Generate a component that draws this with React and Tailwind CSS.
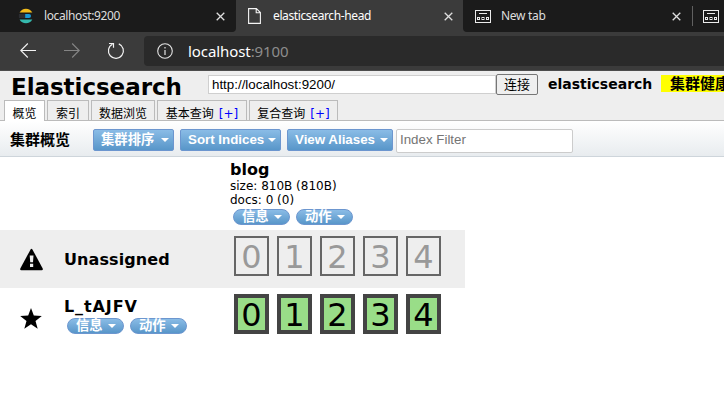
import React from "react";

const UI = "font-['Noto_Sans','Noto_Sans_CJK_SC',sans-serif]";
const VERDANA = "font-['DejaVu_Sans','Noto_Sans_CJK_SC',sans-serif]";
const ARIAL = "font-['Liberation_Sans','Noto_Sans_CJK_SC',sans-serif]";

function Close({ className = "" }) {
  return (
    <svg width="9" height="9" viewBox="0 0 9 9" className={className} fill="none" stroke="#dedede" strokeWidth="1.3">
      <path d="M.7.7l7.6 7.6M8.3.7L.7 8.3" />
    </svg>
  );
}

function ElasticLogo() {
  return (
    <svg width="16" height="16" viewBox="0 0 16 16" className="shrink-0">
      <path d="M1.6 4.6A7.2 7.2 0 0 1 14.3 4.6z" fill="#f2bc1b" />
      <path d="M1 6h6.2v4H1a8 8 0 0 1 0-4z" fill="#2c2e33" />
      <path d="M7.2 6h3.8a2 2 0 0 1 0 4H7.2z" fill="#1a9ad6" />
      <path d="M1.6 11.4h12.7A7.2 7.2 0 0 1 1.6 11.4z" fill="#35b9ad" />
    </svg>
  );
}

function NewTabIcon() {
  return (
    <svg width="16" height="13" viewBox="0 0 16 13" fill="none" stroke="#ececec" className="shrink-0">
      <rect x=".5" y=".5" width="15" height="12" />
      <path d="M4 3.5h8" />
      <rect x="2.5" y="7.5" width="2" height="2" />
      <rect x="7" y="7.5" width="2" height="2" />
      <rect x="11.5" y="7.5" width="2" height="2" />
    </svg>
  );
}

function BrowserTabs() {
  return (
    <div className={`flex h-8 bg-[#3b3b3b] text-[12px] leading-8 ${UI}`}>
      <div className="flex h-8 w-[236px] items-center rounded-br-[4px] bg-[#1b1b1b] pl-[18px] text-[#dedede]">
        <ElasticLogo />
        <span className="ml-[10px] w-[172px] tracking-[-0.38px]">localhost:9200</span>
        <Close />
      </div>
      <div className="flex h-8 w-[227px] items-center pl-3 text-white">
        <svg width="13" height="16" viewBox="0 0 13 16" fill="none" stroke="#f4f4f4" strokeWidth="1.1">
          <path d="M.6.6h7.8l4 4v10.8H.6zM8.2.6v4.2h4.2" />
        </svg>
        <span className="ml-[12px] w-[171px] tracking-[-0.38px]">elasticsearch-head</span>
        <Close />
      </div>
      <div className="flex h-8 grow items-center rounded-bl-[4px] bg-[#1b1b1b] pl-[12px] text-[#dedede]">
        <NewTabIcon />
        <span className="ml-[10px] w-[171px] tracking-[-0.3px]">New tab</span>
        <Close />
        <div className="mr-[10px] ml-[11px] h-5 w-px bg-[#606060]" />
        <NewTabIcon />
      </div>
    </div>
  );
}

function AddressBar() {
  return (
    <div className="flex h-[39px] items-start border-b border-[#4d4d4d] bg-[#3b3b3b] pt-1 pl-5">
      <svg width="16" height="16" viewBox="0 0 16 16" fill="none" stroke="#f2f2f2" strokeWidth="1.1" className="mt-[7px]">
        <path d="M16 7.5H.8M7.8.5l-7 7 7 7" />
      </svg>
      <svg width="16" height="16" viewBox="0 0 16 16" fill="none" stroke="#858585" strokeWidth="1.1" className="mt-[7px] ml-7">
        <path d="M0 7.5h15.2M8.2.5l7 7-7 7" />
      </svg>
      <svg width="18" height="18" viewBox="0 0 18 18" fill="none" stroke="#f2f2f2" strokeWidth="1.2" className="mt-[6px] ml-[27px]">
        <path d="M11.8 1.9A7.5 7.5 0 1 1 5.4 2.2M2 1.5h4.5v4.3" />
      </svg>
      <div className={`ml-[19px] flex h-[30px] grow items-center rounded-l-[4px] bg-[#2a2a2a] pl-[13px] text-[15px] leading-[30px] text-white ${UI}`}>
        <svg width="16" height="16" viewBox="0 0 16 16" fill="none" stroke="#e4e4e4" strokeWidth="1.1">
          <circle cx="8" cy="8" r="7.3" />
          <path d="M8 7v5M8 4v1.5" strokeWidth="1.2" />
        </svg>
        <span className="ml-[15px] tracking-[-0.08px]">
          localhost<span className="text-[#8d8d8d]">:9100</span>
        </span>
      </div>
    </div>
  );
}

function Header() {
  return (
    <div className={`flex h-[29px] items-start overflow-hidden bg-[#eeeeee] pt-[3px] pl-[11px] font-bold whitespace-nowrap text-black ${VERDANA}`}>
      <h1 className="h-[26px] w-[197px] shrink-0 text-[23px] leading-[27px] tracking-[-0.05px]">Elasticsearch</h1>
      <div className={`mt-[1px] h-[19px] w-[288px] shrink-0 border border-[#cfcfcf] bg-white pl-[3px] text-[13.33px] leading-[17px] font-normal ${ARIAL}`}>
        http://localhost:9200/
      </div>
      <div className="h-[21px] w-[42px] shrink-0 rounded-[2px] border border-[#767676] bg-[#efefef] text-center text-[13px] leading-[19px] font-normal">
        连接
      </div>
      <span className="ml-[10px] w-[113px] shrink-0 text-[14px] leading-[20px]">elasticsearch</span>
      <div className="mt-[1px] h-[17px] w-[63px] shrink-0 bg-[#ffff00] pl-[9px] text-[15px] leading-[18px]">集群健康</div>
    </div>
  );
}

function NavTab({ label, plus, active, width }) {
  return (
    <div
      style={{ width }}
      className={`flex justify-center border border-b-0 border-[#bbbbbb] text-[12px] ${active ? "h-[21px] bg-white leading-[26px]" : "h-5 bg-[#eeeeee] leading-[26px]"}`}
    >
      {label}
      {plus && <span className="ml-[5px] text-[#0000ff]">[+]</span>}
    </div>
  );
}

function Nav() {
  return (
    <div className={`flex h-[21px] items-start gap-[2px] bg-[#eeeeee] bg-[linear-gradient(#bbbbbb,#bbbbbb)] bg-[length:100%_1px] bg-bottom bg-no-repeat pl-1 whitespace-nowrap ${VERDANA}`}>
      <NavTab label="概览" active width={41} />
      <NavTab label="索引" width={42} />
      <NavTab label="数据浏览" width={64} />
      <NavTab label="基本查询" plus width={90} />
      <NavTab label="复合查询" plus width={89} />
    </div>
  );
}

function Caret() {
  return (
    <svg width="8" height="4" viewBox="0 0 8 4" className="shrink-0">
      <path d="M0 0h8L4 4z" fill="#fff" />
    </svg>
  );
}

function MenuButton({ label, className }) {
  return (
    <div className={`flex h-[22px] items-center justify-between rounded-[2px] border border-[#6c96cf] bg-linear-to-b from-[#8abce6] to-[#5896c9] pr-[4px] pl-[7px] text-[13.33px] leading-[20px] font-bold whitespace-nowrap text-white ${ARIAL} ${className}`}>
      {label}
      <Caret />
    </div>
  );
}

function Pill({ label }) {
  return (
    <div className={`flex h-4 w-[57px] items-center justify-between rounded-full border border-[#6c96cf] bg-linear-to-b from-[#8abce6] to-[#5896c9] pr-[7px] pl-[8px] text-[13.33px] leading-[14px] font-bold text-white ${ARIAL}`}>
      {label}
      <Caret />
    </div>
  );
}

function Pills() {
  return (
    <div className="flex gap-[6px] pl-[3px]">
      <Pill label="信息" />
      <Pill label="动作" />
    </div>
  );
}

function Toolbar() {
  return (
    <div className="flex h-9 items-start border-b border-[#ced5db] bg-linear-to-b from-white to-[#e8ecef] pt-2 pl-[10px]">
      <h2 className={`w-[83px] text-[15px] leading-[22px] font-bold ${VERDANA}`}>集群概览</h2>
      <MenuButton label="集群排序" className="w-[81px]" />
      <MenuButton label="Sort Indices" className="ml-[6px] w-[101px]" />
      <MenuButton label="View Aliases" className="ml-[6px] w-[106px]" />
      <div className={`ml-[3px] h-6 w-[177px] rounded-[2px] border border-[#cccccc] bg-white pl-[3px] text-[13.33px] leading-[20px] text-[#757575] ${ARIAL}`}>
        Index Filter
      </div>
    </div>
  );
}

function Shards({ assigned }) {
  return (
    <div className="flex gap-2">
      {[0, 1, 2, 3, 4].map((n) => (
        <div
          key={n}
          className={`flex h-10 w-[35px] items-start justify-center text-[32px] ${assigned ? "border-4 border-[#444444] bg-[#99dd88] leading-[34px] text-black" : "border-2 border-[#666666] leading-[38px] text-[#999999]"}`}
        >
          {n}
        </div>
      ))}
    </div>
  );
}

function Cluster() {
  return (
    <div className={`w-[465px] text-black ${VERDANA}`}>
      <div className="h-[73px] pt-[3px] pl-[230px]">
        <div className="text-[16px] leading-[19px] font-bold">blog</div>
        <div className="text-[12px] leading-[14px]">size: 810B (810B)</div>
        <div className="mb-[2px] text-[12px] leading-[14px]">docs: 0 (0)</div>
        <Pills />
      </div>
      <div className="flex h-[58px] items-start bg-[#eeeeee] pt-[6px] pl-5">
        <svg width="24" height="23" viewBox="0 0 24 23" className="mt-[12px]">
          <path d="M10.6 1.4q.9-1.2 1.8 0l10.3 19q.6 1.8-1 1.8H1.3q-1.6 0-1-1.8z" fill="#000" />
          <path d="M9.7 7.5h3.8l-.5 6.8h-2.8zM10 15.8h3.2V19H10z" fill="#eee" />
        </svg>
        <div className="ml-5 w-[170px] pt-[14px] text-[16px] leading-[20px] font-bold tracking-[0.1px]">Unassigned</div>
        <Shards />
      </div>
      <div className="flex h-[60px] items-start pt-[6px] pl-5">
        <svg width="22" height="21" viewBox="0 0 22 21" className="mt-[14px]">
          <path d="M11 0l2.8 7.6 8 .3-6.3 5 2.2 7.8-6.7-4.5-6.7 4.5 2.2-7.8-6.3-5 8-.3z" fill="#000" />
        </svg>
        <div className="ml-[22px] w-[170px] pt-[3px]">
          <div className="mb-[1px] text-[16px] leading-5 font-bold tracking-[0.9px]">L_tAJFV</div>
          <Pills />
        </div>
        <Shards assigned />
      </div>
    </div>
  );
}

export default function App() {
  return (
    <div className="h-[401px] w-[724px] overflow-hidden bg-white">
      <BrowserTabs />
      <AddressBar />
      <Header />
      <Nav />
      <Toolbar />
      <Cluster />
    </div>
  );
}
